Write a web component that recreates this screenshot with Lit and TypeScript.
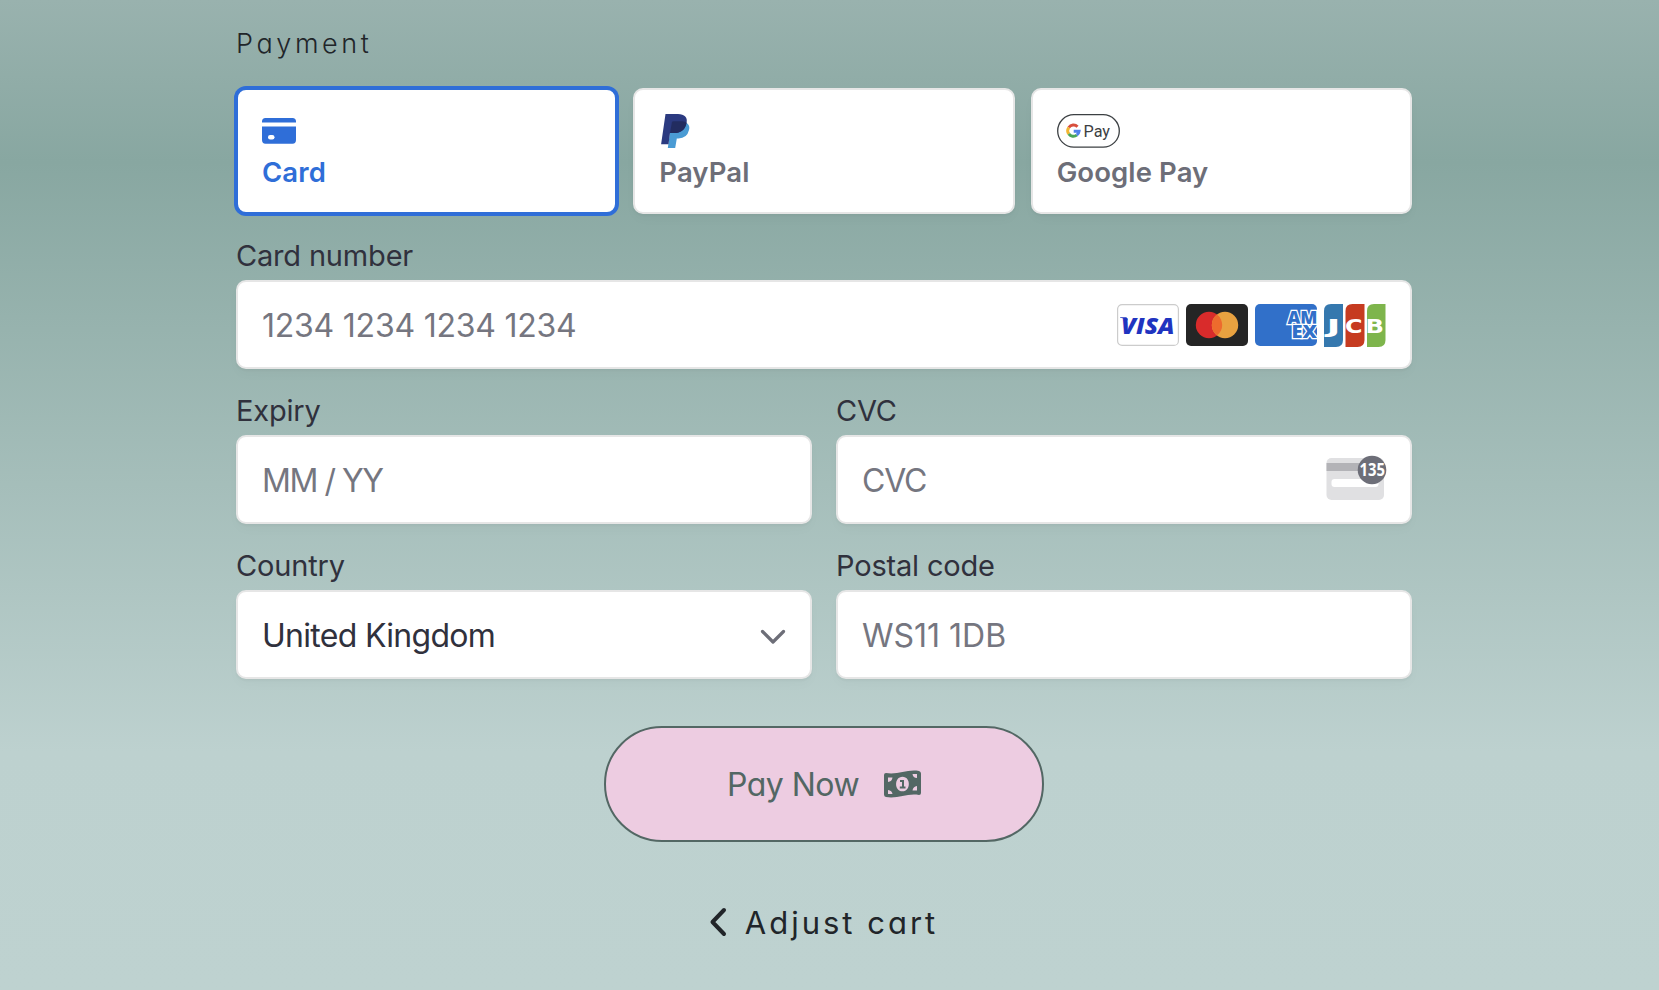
import { LitElement, html, css, svg } from "lit";
import { customElement } from "lit/decorators.js";

@customElement("app-root")
class AppRoot extends LitElement {
  static styles = css`
    :host { display: block; height: 990px; overflow: hidden; box-sizing: border-box; padding: 28px 247px 0 236px;
      font-family: Inter, "Liberation Sans", sans-serif; color: #30313d;
      background: linear-gradient(180deg, #99b2ae 0px, #88a7a1 162px, #bdd1cf 752px, #bed2d0 990px); }
    * { box-sizing: border-box; }
    svg { display: block; overflow: visible; flex: none; }
    .soft { font-feature-settings: "cv11", "ss03"; }
    h2 { margin: 0; height: 32px; line-height: 32px; font-size: 27px; font-weight: 300; letter-spacing: 3.6px; color: #212529; }
    .tabs { display: grid; grid-template-columns: repeat(3, 1fr); gap: 16px; margin-top: 28px; }
    .tab { height: 126px; border-radius: 10px; border: 2px solid #e6e6e6; background: #fff; padding: 24px; color: #6d6e78;
      box-shadow: 0 2px 2px rgba(0,0,0,.03), 0 6px 12px rgba(0,0,0,.02); }
    .tab.on { border-color: #2f6ed8; color: #2f6ed8; box-shadow: 0 0 0 2px #2f6ed8; }
    .ic { height: 34px; display: flex; align-items: center; }
    .tab b { display: block; font-weight: 600; font-size: 27.5px; line-height: 34px; margin-top: 7px; letter-spacing: 0.1px; }
    label { display: block; font-size: 29px; line-height: 34px; height: 34px; margin-top: 25px; margin-bottom: 7px; white-space: nowrap; letter-spacing: -0.18px; }
    .box { height: 89px; border-radius: 10px; border: 2px solid #e6e6e6; background: #fff; display: flex; align-items: center; justify-content: space-between;
      padding: 1px 24px 0; font-size: 32px; color: #757680; box-shadow: 0 2px 2px rgba(0,0,0,.03), 0 6px 12px rgba(0,0,0,.02); white-space: nowrap; }
    .dark { color: #30313d; }
    .number { letter-spacing: -0.23px; }
    .date { letter-spacing: -1.45px; }
    .code { letter-spacing: -1.2px; }
    .country { letter-spacing: -0.7px; }
    .row { display: grid; grid-template-columns: 1fr 1fr; gap: 24px; }
    .brands { display: flex; gap: 7px; padding-top: 1px; }
    .hint { padding-bottom: 5px; }
    .chev { padding-top: 3px; }
    .pay { display: flex; align-items: center; justify-content: center; width: 440px; height: 116px; border-radius: 58px; margin: 47px auto 0;
      border: 2px solid #536764; background: #edcce1; color: #536764; font-size: 32px; font-weight: 400; letter-spacing: -0.5px; gap: 25px; }
    .back { display: flex; align-items: center; justify-content: center; gap: 19px; margin-top: 60px; height: 40px; font-size: 31px; font-weight: 400; letter-spacing: 3px; color: #212529; }
  `;

  card() {
    return svg`<svg width="34" height="34" viewBox="0 0 34 34"><path fill="#2f6ed8" d="M0 8.5V7.500Q0 4 3.500 4H30.500Q34 4 34 7.500V8.500ZM0 12.500H34V26Q34 29.700 30.500 29.700H3.500Q0 29.700 0 26Z"/><rect x="6" y="21" width="6.500" height="4.500" rx="2.200" fill="#fff"/></svg>`;
  }
  paypal() {
    return svg`<svg width="30" height="34" viewBox="-1.500 0 30 34"><path fill="#4a9bd4" d="M26.300 9Q29.800 11.500 28.500 16Q26.500 24.400 18 24.400H16.300L14.700 34H7.300L9.500 18.500Z"/><path fill="#2b3a80" d="M5 0H17.500C24 0 27.500 3.500 26 9C24.500 16.500 19.500 19 14 19H9.500L8 30.200H.6Z"/><path fill="#222c60" d="M11.500 7.800Q12 7.300 13 7.300H22Q25 7.400 26.200 8.700C24.500 16.500 19.500 19 14 19H9.500Z"/></svg>`;
  }
  gpay() {
    return svg`<svg width="63" height="34" viewBox="0 0 63 34"><rect x=".7" y=".7" width="61.600" height="32.400" rx="16.200" fill="#fff" stroke="#3c4043" stroke-width="1.300"/>
      <g fill="none" stroke-width="3"><path stroke="#d94f3d" d="M11.800 13.500A5.600 5.600 0 0 1 20.500 12.700"/><path stroke="#f2b632" d="M11.800 13.500A5.600 5.600 0 0 0 11.800 19.900"/><path stroke="#4aa658" d="M11.800 19.900A5.600 5.600 0 0 0 19.800 21.100"/><path stroke="#4f82ea" d="M19.800 21.100A5.600 5.600 0 0 0 22.100 17.200H16.700"/></g>
      <text x="26.500" y="22.800" font-family="Roboto, sans-serif" font-size="17" textLength="26.500" lengthAdjust="spacingAndGlyphs" fill="#3c4043">Pay</text></svg>`;
  }
  brands() {
    const t = "Open Sans, sans-serif";
    return html`<div class="brands">
      ${svg`<svg width="62" height="42"><rect x=".6" y=".6" width="60.800" height="40.800" rx="4.500" fill="#fff" stroke="#ccc" stroke-width="1.200"/><path fill="#1f34c0" d="M3 13.200H9.500L11 16.500Q7 14 3 13.800Z"/><text x="4" y="29.700" font-family=${t} font-size="23" font-weight="800" font-style="italic" textLength="53.500" lengthAdjust="spacingAndGlyphs" fill="#1f34c0">VISA</text></svg>
      <svg width="62" height="42"><rect width="62" height="42" rx="5" fill="#252525"/><circle cx="23" cy="21" r="13.200" fill="#d92b2b"/><circle cx="39" cy="21" r="13.200" fill="#e9a240"/><path fill="#ed6b2d" d="M31 10.500A13.200 13.200 0 0 1 31 31.500A13.200 13.200 0 0 1 31 10.500"/></svg>
      <svg width="62" height="42" style="overflow:hidden"><rect width="62" height="42" rx="5" fill="#3170c9"/><g font-family=${t} font-weight="800" font-size="17.500" fill="#3170c9" stroke="#fff" stroke-width="2.400" paint-order="stroke"><text x="32.500" y="20.200" textLength="30" lengthAdjust="spacingAndGlyphs">AM</text><text x="36.500" y="34.300" textLength="25.500" lengthAdjust="spacingAndGlyphs">EX</text></g></svg>
      <svg width="62" height="43"><path fill="#3578ae" d="M0 43V7Q0 0 7 0H19V36Q19 43 12 43Z"/><path fill="#c63b20" d="M21.500 43V7Q21.500 0 28.500 0H40.500V36Q40.500 43 33.500 43Z"/><path fill="#7eb54c" d="M43 43V7Q43 0 50 0H61.500V36Q61.500 43 54.500 43Z"/><g font-family="DejaVu Sans, sans-serif" font-weight="700" font-size="19.500" fill="#fff"><text x="2.500" y="28.500" textLength="14" lengthAdjust="spacingAndGlyphs">J</text><text x="21" y="28.500" textLength="17.500" lengthAdjust="spacingAndGlyphs">C</text><text x="41.500" y="28.500" textLength="18.500" lengthAdjust="spacingAndGlyphs">B</text></g></svg>`}
    </div>`;
  }
  cvc() {
    return html`<div class="hint">${svg`<svg width="60" height="46" viewBox="0 0 60 46"><rect x="0.500" y="3" width="57.500" height="42" rx="5" fill="#e0e0e2"/><rect x=".5" y="8" width="57.500" height="8" fill="#b3b3b7"/><rect x="5.500" y="24" width="47" height="8" rx="3" fill="#fff"/><circle cx="46" cy="15" r="14.300" fill="#6d6e78"/><text x="33.500" y="21" font-family="Noto Sans, sans-serif" font-weight="700" font-size="17" textLength="25.500" lengthAdjust="spacingAndGlyphs" fill="#fff">135</text></svg>`}</div>`;
  }
  render() {
    return html`
      <h2 class="soft">Payment</h2>
      <div class="tabs">
        <div class="tab on"><div class="ic">${this.card()}</div><b>Card</b></div>
        <div class="tab"><div class="ic">${this.paypal()}</div><b>PayPal</b></div>
        <div class="tab"><div class="ic">${this.gpay()}</div><b>Google Pay</b></div>
      </div>
      <label>Card number</label>
      <div class="box"><span class="number">1234 1234 1234 1234</span>${this.brands()}</div>
      <div class="row">
        <div><label>Expiry</label><div class="box"><span class="date">MM / YY</span></div></div>
        <div><label>CVC</label><div class="box"><span class="code">CVC</span>${this.cvc()}</div></div>
      </div>
      <div class="row">
        <div><label>Country</label><div class="box dark"><span class="country">United Kingdom</span>
          <div class="chev"><svg width="26" height="16" viewBox="0 0 26 16"><path d="M2.500 2.500L13 13L23.500 2.500" fill="none" stroke="#6d6e78" stroke-width="3.200" stroke-linecap="round" stroke-linejoin="round"/></svg></div></div></div>
        <div><label>Postal code</label><div class="box"><span>WS11 1DB</span></div></div>
      </div>
      <div class="pay soft"><span>Pay Now</span>
        <svg width="37" height="28" viewBox="0 0 37 28"><path fill="#536764" fill-rule="evenodd" d="M0 5Q0 3 2 3C14 5 23-1 35 1Q37 1.500 37 3.500V23Q37 25 35 25C23 23 14 29 2 27Q0 26.500 0 24.500ZM4 7.500V12Q8 11.500 8.500 7.500ZM4 20V24H8.500Q8 20.500 4 20ZM28.500 4Q29 8 33 8V4ZM33 16Q29 16.500 28.500 20.500H33ZM18.500 6.700C10 6.700 10 21.300 18.500 21.300S27 6.700 18.500 6.700Z"/><path fill="none" stroke="#536764" stroke-width="2" d="M16 11H19V17.500M15.800 17.500H21.500"/></svg></div>
      <div class="back soft"><svg width="16" height="28" viewBox="0 0 16 28"><path d="M14 2L2.500 14L14 26" fill="none" stroke="#212529" stroke-width="4" stroke-linecap="round" stroke-linejoin="round"/></svg><span>Adjust cart</span></div>
    `;
  }
}
